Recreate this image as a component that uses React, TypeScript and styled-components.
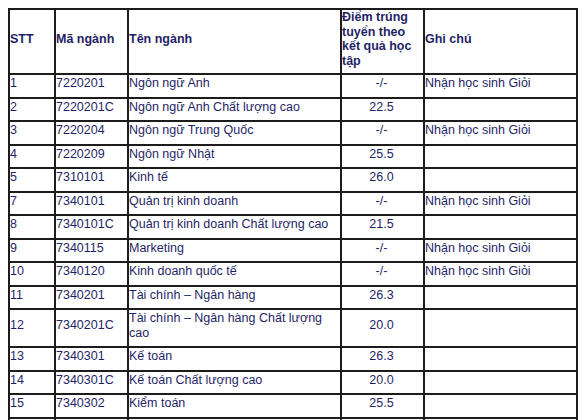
import React from "react";
import styled, { createGlobalStyle } from "styled-components";

const GlobalStyle = createGlobalStyle`
  body {
    margin: 8px;
    background: #ffffff;
    font-family: "Liberation Sans", Arial, sans-serif;
  }
`;

const Table = styled.table`
  border-collapse: collapse;
  table-layout: fixed;
  width: 568px;
  color: #1f1f68;
  font-size: 12.5px;
  line-height: 14.5px;
`;

const HeadCell = styled.th`
  border: 2px solid #1c1c1c;
  padding: 0 2px 5px 0;
  text-align: left;
  vertical-align: middle;
  font-weight: bold;
`;

const Cell = styled.td<{ $center?: boolean }>`
  border: 2px solid #1c1c1c;
  padding: 1px 2px 6px 0;
  vertical-align: middle;
  text-align: ${(p) => (p.$center ? "center" : "left")};
  white-space: normal;
`;

type Row = {
  stt: string;
  code: string;
  name: string;
  score: string;
  note?: string;
};

const GOOD = "Nhận học sinh Giỏi";

const rows: Row[] = [
  { stt: "1", code: "7220201", name: "Ngôn ngữ Anh", score: "-/-", note: GOOD },
  { stt: "2", code: "7220201C", name: "Ngôn ngữ Anh Chất lượng cao", score: "22.5" },
  { stt: "3", code: "7220204", name: "Ngôn ngữ Trung Quốc", score: "-/-", note: GOOD },
  { stt: "4", code: "7220209", name: "Ngôn ngữ Nhật", score: "25.5" },
  { stt: "5", code: "7310101", name: "Kinh tế", score: "26.0" },
  { stt: "7", code: "7340101", name: "Quản trị kinh doanh", score: "-/-", note: GOOD },
  { stt: "8", code: "7340101C", name: "Quản trị kinh doanh Chất lượng cao", score: "21.5" },
  { stt: "9", code: "7340115", name: "Marketing", score: "-/-", note: GOOD },
  { stt: "10", code: "7340120", name: "Kinh doanh quốc tế", score: "-/-", note: GOOD },
  { stt: "11", code: "7340201", name: "Tài chính – Ngân hàng", score: "26.3" },
  { stt: "12", code: "7340201C", name: "Tài chính – Ngân hàng Chất lượng cao", score: "20.0" },
  { stt: "13", code: "7340301", name: "Kế toán", score: "26.3" },
  { stt: "14", code: "7340301C", name: "Kế toán Chất lượng cao", score: "20.0" },
  { stt: "15", code: "7340302", name: "Kiểm toán", score: "25.5" },
  { stt: "16", code: "7340302C", name: "Kiểm toán Chất lượng cao", score: "20.0" },
];

const App = () => {
  return (
    <>
      <GlobalStyle />
      <Table>
        <colgroup>
          <col style={{ width: 46 }} />
          <col style={{ width: 73 }} />
          <col style={{ width: 213 }} />
          <col style={{ width: 83 }} />
          <col style={{ width: 153 }} />
        </colgroup>
        <thead>
          <tr>
            <HeadCell>STT</HeadCell>
            <HeadCell>Mã ngành</HeadCell>
            <HeadCell>Tên ngành</HeadCell>
            <HeadCell>Điểm trúng tuyển theo kết quả học tập</HeadCell>
            <HeadCell>Ghi chú</HeadCell>
          </tr>
        </thead>
        <tbody>
          {rows.map((r) => (
            <tr key={r.stt}>
              <Cell>{r.stt}</Cell>
              <Cell>{r.code}</Cell>
              <Cell>{r.name}</Cell>
              <Cell $center>{r.score}</Cell>
              <Cell>{r.note ?? ""}</Cell>
            </tr>
          ))}
        </tbody>
      </Table>
    </>
  );
};

export default App;
